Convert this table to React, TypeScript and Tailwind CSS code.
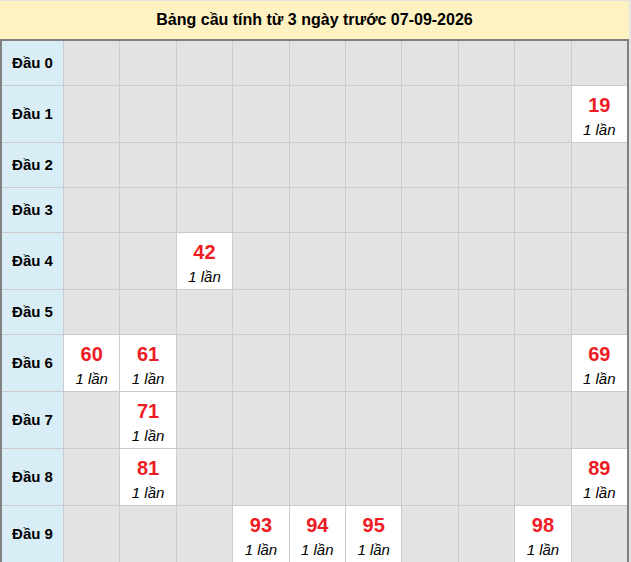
const hits: Record<number, Record<number, string>> = {
  1: { 9: "19" },
  4: { 2: "42" },
  6: { 0: "60", 1: "61", 9: "69" },
  7: { 1: "71" },
  8: { 1: "81", 9: "89" },
  9: { 3: "93", 4: "94", 5: "95", 8: "98" },
};

function Row({ head }: { head: number }) {
  const row = hits[head];
  const tall = !!row;

  return (
    <>
      <div
        className={`flex items-center justify-center bg-[#d9edf7] text-[15px] font-bold text-black ${tall ? "h-[56px]" : "h-[44px]"}`}
      >
        Đầu {head}
      </div>
      {Array.from({ length: 10 }).map((_, i) =>
        row && row[i] ? (
          <div
            key={i}
            className="flex h-[56px] flex-col items-center bg-white pt-[7px]"
          >
            <div className="text-[20px] leading-[24px] font-bold text-[#ed1c24]">
              {row[i]}
            </div>
            <div className="mt-[3px] text-[15px] leading-[20px] italic text-black">
              1 lần
            </div>
          </div>
        ) : (
          <div
            key={i}
            className={`bg-[#e2e3e5] ${tall ? "h-[56px]" : "h-[44px]"}`}
          />
        ),
      )}
    </>
  );
}

export default function App() {
  return (
    <div
      className="w-[631px] h-[562px] overflow-hidden bg-[#e4e4e4] pt-px"
      style={{ fontFamily: '"Liberation Sans", Arial, sans-serif' }}
    >
      <div className="w-[629px]">
        <div className="flex h-[38px] items-center justify-center bg-[#fff2c2] text-[16px] font-bold text-black">
          Bảng cầu tính từ 3 ngày trước 07-09-2026
        </div>
        <div className="border-2 border-b-0 border-[#808080]">
          <div className="grid grid-cols-[61px_repeat(10,1fr)] gap-px bg-[#cbcbcb]">
            {Array.from({ length: 10 }).map((_, h) => (
              <Row key={h} head={h} />
            ))}
          </div>
        </div>
      </div>
    </div>
  );
}
